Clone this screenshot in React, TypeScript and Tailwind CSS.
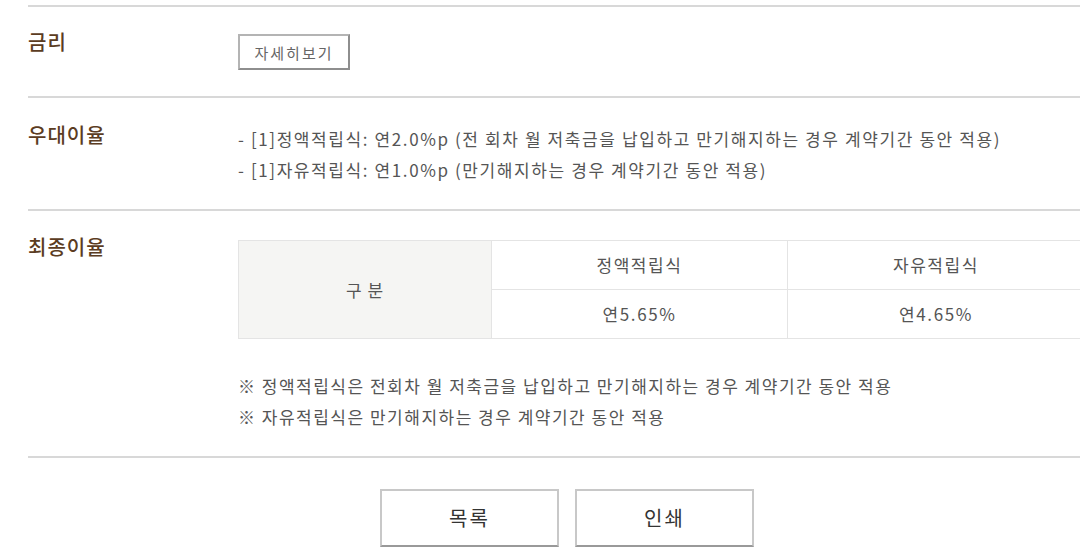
import React from 'react';

const font = { fontFamily: '"Noto Sans CJK KR", "Noto Sans", sans-serif' };

function Label({ children }: { children: React.ReactNode }) {
    return (
        <div className="w-[210px] shrink-0 text-[20px] leading-[30px] font-medium tracking-[1px] text-[#5b3c22]">
            {children}
        </div>
    );
}

export default function App() {
    return (
        <div className="w-[1080px] h-[559px] overflow-hidden bg-white" style={font}>
            <div className="w-[1078px] ml-[28px] pt-[5px]">

                {/* 금리 */}
                <div className="flex border-t-2 border-[#d8d8d8] pt-[20px] pb-[26px]">
                    <Label>금리</Label>
                    <div className="mt-[7px]">
                        <button className="w-[112px] h-[36px] border-2 border-t-[#b4b4b4] border-l-[#b4b4b4] border-r-[#8e8e8e] border-b-[#8e8e8e] bg-white text-[15px] tracking-[2px] text-[#666] leading-none">
                            자세히보기
                        </button>
                    </div>
                </div>

                {/* 우대이율 */}
                <div className="flex border-t-2 border-[#d8d8d8] pt-[22px] pb-[24px]">
                    <Label>우대이율</Label>
                    <div className="mt-[3px] text-[17px] leading-[31px] tracking-[1.6px] text-[#555]">
                        <p>- [1]정액적립식: 연2.0%p (전 회차 월 저축금을 납입하고 만기해지하는 경우 계약기간 동안 적용)</p>
                        <p>- [1]자유적립식: 연1.0%p (만기해지하는 경우 계약기간 동안 적용)</p>
                    </div>
                </div>

                {/* 최종이율 */}
                <div className="flex border-t-2 border-[#d8d8d8] pt-[21px] pb-[24px]">
                    <Label>최종이율</Label>
                    <div className="mt-[8px]">
                        <div className="grid grid-cols-[253px_296px_296px] grid-rows-[49px_48px] border border-[#e4e4e4] text-[17px] tracking-[1.6px] text-[#555]">
                            <div className="row-span-2 flex items-center justify-center bg-[#f5f5f3] border-r border-[#e4e4e4] tracking-[1px]">구 분</div>
                            <div className="flex items-center justify-center border-r border-b border-[#e4e4e4]">정액적립식</div>
                            <div className="flex items-center justify-center border-b border-[#e4e4e4]">자유적립식</div>
                            <div className="flex items-center justify-center border-r border-[#e4e4e4]">연5.65%</div>
                            <div className="flex items-center justify-center">연4.65%</div>
                        </div>
                        <div className="mt-[31px] text-[17px] leading-[31px] tracking-[1.5px] text-[#555]">
                            <p>※ 정액적립식은 전회차 월 저축금을 납입하고 만기해지하는 경우 계약기간 동안 적용</p>
                            <p>※ 자유적립식은 만기해지하는 경우 계약기간 동안 적용</p>
                        </div>
                    </div>
                </div>

                {/* Buttons */}
                <div className="flex justify-center gap-[16px] border-t-2 border-[#d8d8d8] pt-[31px]">
                    <button className="w-[179px] h-[58px] border-2 border-[#c8c8c8] border-b-[#999] bg-white text-[20px] text-[#333] tracking-[2px]">목록</button>
                    <button className="w-[179px] h-[58px] border-2 border-[#c8c8c8] border-b-[#999] bg-white text-[20px] text-[#333] tracking-[2px]">인쇄</button>
                </div>
            </div>
        </div>
    );
}
